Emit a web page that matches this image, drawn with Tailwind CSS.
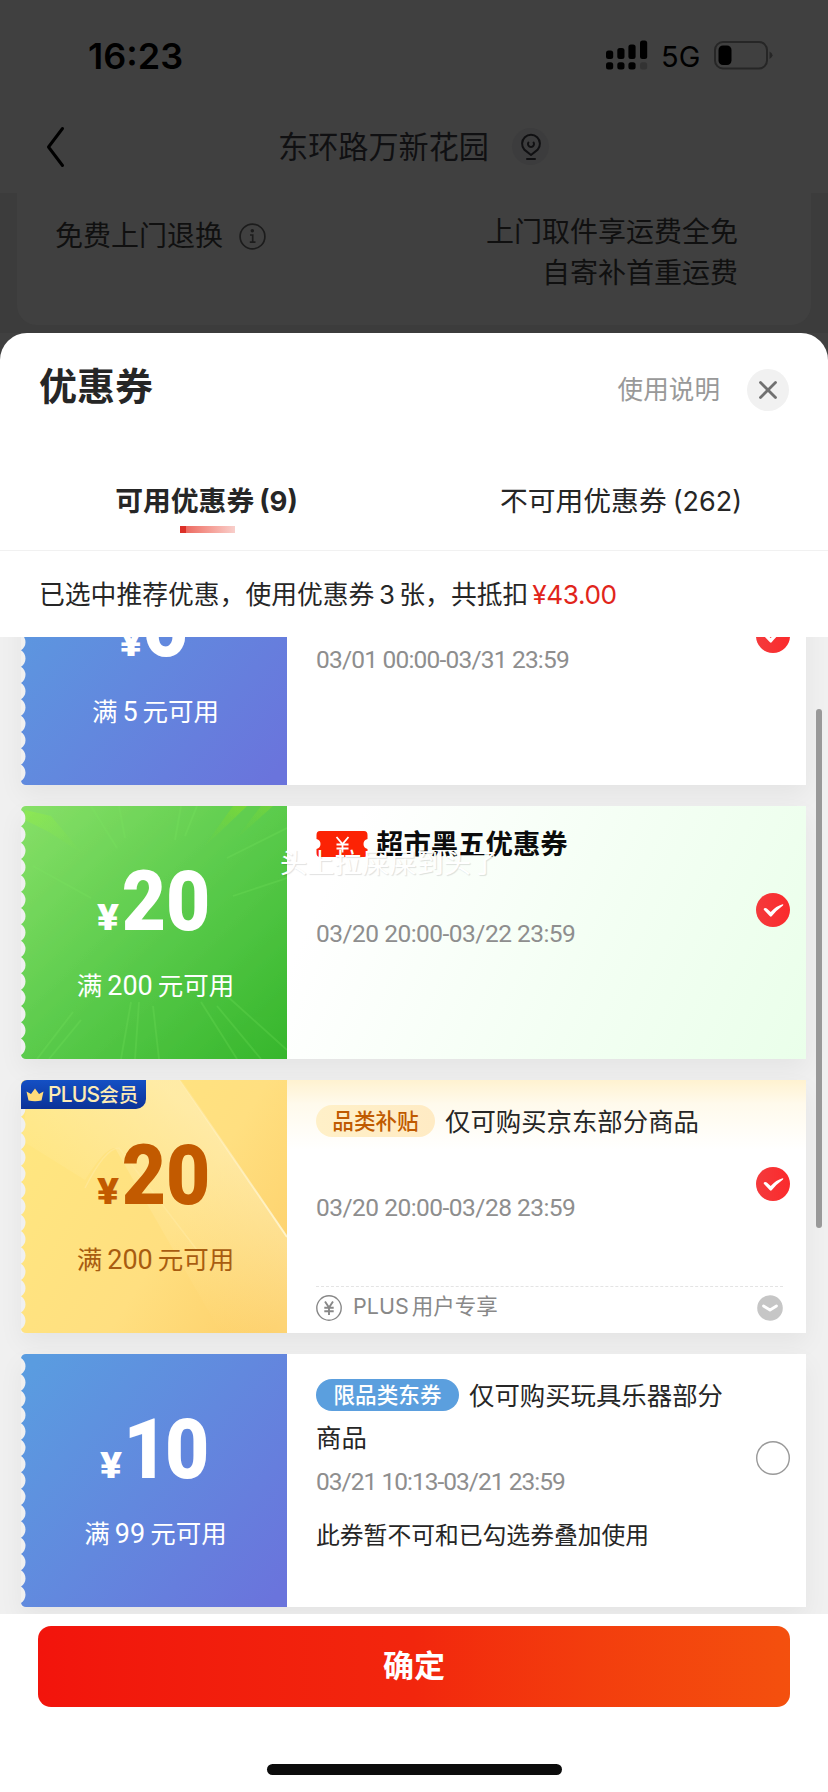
<!DOCTYPE html>
<html lang="zh-CN">
<head>
<meta charset="utf-8">
<title>优惠券</title>
<script src="https://cdn.jsdelivr.net/npm/@tailwindcss/browser@4"></script>
</head>
<body class="w-[828px] h-[1792px] overflow-hidden bg-[#404040] font-['Inter','Noto_Sans_CJK_SC',sans-serif] text-[#262626] whitespace-nowrap">
<svg width="0" height="0" class="absolute">
  <defs>
    <linearGradient id="blue" x1="0" y1="0.1" x2="1" y2="0.9"><stop offset="0" stop-color="#5a9ce0"/><stop offset="1" stop-color="#6a74dc"/></linearGradient>
    <linearGradient id="green" x1="0" y1="0" x2="1" y2="1"><stop offset="0" stop-color="#88e068"/><stop offset="0.5" stop-color="#5bcb4c"/><stop offset="1" stop-color="#36b62c"/></linearGradient>
    <linearGradient id="gold" x1="0" y1="0.3" x2="1" y2="0.9"><stop offset="0" stop-color="#ffe680"/><stop offset="0.55" stop-color="#ffdf80"/><stop offset="1" stop-color="#fdcf69"/></linearGradient>
    <linearGradient id="goldLight" x1="0.2" y1="0.9" x2="0.75" y2="0.2"><stop offset="0.3" stop-color="#fff0b8" stop-opacity="0"/><stop offset="1" stop-color="#fff2c4"/></linearGradient>
    <linearGradient id="goldEdge" x1="0" y1="0" x2="1" y2="1"><stop offset="0" stop-color="#fff8dc" stop-opacity="0.1"/><stop offset="1" stop-color="#fff4cc"/></linearGradient>
    <linearGradient id="lime" x1="0" y1="0" x2="1" y2="1"><stop offset="0" stop-color="#93ee48"/><stop offset="1" stop-color="#7fe050" stop-opacity="0"/></linearGradient>
    <linearGradient id="lime2" x1="1" y1="0" x2="0" y2="1"><stop offset="0" stop-color="#86dc30"/><stop offset="1" stop-color="#6fd040" stop-opacity="0"/></linearGradient>
    <linearGradient id="red" x1="0" y1="0" x2="1" y2="0"><stop offset="0" stop-color="#f43a3c"/><stop offset="1" stop-color="#fb2a2c"/></linearGradient>
    <path id="ticket" d="M266 0H5Q1 0 0 4a9.66 9.66 0 0 1 0 16.33a9.66 9.66 0 0 1 0 16.33a9.66 9.66 0 0 1 0 16.33a9.66 9.66 0 0 1 0 16.33a9.66 9.66 0 0 1 0 16.33a9.66 9.66 0 0 1 0 16.33a9.66 9.66 0 0 1 0 16.33a9.66 9.66 0 0 1 0 16.33a9.66 9.66 0 0 1 0 16.33a9.66 9.66 0 0 1 0 16.33a9.66 9.66 0 0 1 0 16.33a9.66 9.66 0 0 1 0 16.33a9.66 9.66 0 0 1 0 16.33a9.66 9.66 0 0 1 0 16.33a9.66 9.66 0 0 1 0 16.33Q1 253 5 253H266Z"/>
    <clipPath id="ticketClip"><use href="#ticket"/></clipPath>
    <g id="check"><circle cx="17" cy="17" r="17" fill="url(#red)"/><path d="M8.2 15.3Q9.600 14.500 10.800 15.500L14.700 19Q20 13 26.600 11.200Q27.900 11.200 27 12.400Q20.500 17 15.700 23.300Q14.700 24.300 13.700 23L7.800 16.800Q7.400 15.900 8.200 15.300Z" fill="#fff"/></g>
  </defs>
</svg>

<div class="flex flex-col h-[333px]">
  <header class="h-[96px] flex items-center pl-[88px] pr-[55px] text-black">
    <span class="flex-1 text-[36px] font-semibold leading-none tracking-[0px] pt-[15px]">16:23</span>
    <svg class="mt-[13px]" width="42" height="30" viewBox="0 0 42 30"><g fill="#000"><rect x="0" y="10.500" width="7.200" height="8.500" rx="2.500"/><rect x="11.300" y="8" width="7.200" height="11" rx="2.500"/><rect x="22.400" y="4.500" width="7.200" height="14.500" rx="2.500"/><rect x="34" y="0.500" width="7.200" height="18.500" rx="2.500"/><rect x="0" y="22.300" width="7.200" height="7.200" rx="2.500"/><rect x="11.300" y="22.300" width="7.200" height="7.200" rx="2.500"/><rect x="22.400" y="22.300" width="7.200" height="7.200" rx="2.500"/></g><rect x="34" y="22.300" width="7.200" height="7.200" rx="2.500" fill="#333"/></svg>
    <span class="ml-[13px] w-[38px] text-[29px] leading-none pt-[17px]">5G</span>
    <svg class="ml-[15px] mt-[14px]" width="59" height="29" viewBox="0 0 59 29"><rect x="1" y="1" width="52" height="26.500" rx="8" fill="none" stroke="#262626" stroke-width="2"/><rect x="4.500" y="4.500" width="13" height="19.500" rx="4.500" fill="#000"/><path d="M55.500 10.500Q58.500 12 58.500 14.300T55.500 18Z" fill="#262626"/></svg>
  </header>
  <nav class="h-[97px] flex items-center pl-[46px] text-[#101012]">
    <svg class="w-[19px] mt-[4px]" width="19" height="42" viewBox="0 0 19 42" fill="none" stroke="#000" stroke-width="3" stroke-linecap="round" stroke-linejoin="round"><path d="M16.500 2.500L2.500 21L16.500 39.500"/></svg>
    <span class="ml-[213px] w-[211px] text-[30.150px] leading-[40px] mt-[4px]">东环路万新花园</span>
    <span class="ml-[23px] mt-[4px] size-[37px] rounded-full bg-[#3c3c3d] flex items-center justify-center">
      <svg width="22" height="28" viewBox="0 0 22 28" fill="none" stroke="#101012" stroke-width="2" stroke-linecap="round"><path d="M11 22L4.300 16.600A8.900 8.900 0 1 1 17.700 16.600Z" stroke-linejoin="round"/><path d="M8.400 9.500A3 3 0 1 0 13.600 9.500"/><path d="M7 26H15"/></svg>
    </span>
  </nav>
  <div class="flex-1 bg-[#3c3c3c] px-[17px]">
    <div class="h-[132px] bg-[#404040] rounded-b-[20px] flex justify-between pl-[38px] pr-[73px] text-[28px] text-[#101010]">
      <div class="flex h-[40px] mt-[23px] items-center">
        <span>免费上门退换</span>
        <svg class="ml-[16px]" width="27" height="27" viewBox="0 0 27 27" fill="none" stroke="#1c1c1c" stroke-width="1.700"><circle cx="13.500" cy="13.500" r="12.400"/><path d="M11 12H13.700V19M10.800 19.200H16.500"/><circle cx="13.300" cy="7.800" r="0.900" fill="#1c1c1c"/></svg>
      </div>
      <div class="text-right leading-[41px] mt-[19px]">上门取件享运费全免<br>自寄补首重运费</div>
    </div>
  </div>
</div>

<main class="bg-white rounded-t-[27px] h-[1459px] flex flex-col">
  <div class="h-[114px] flex items-center pl-[39px] pr-[39px]">
    <h1 class="flex-1 text-[38px] font-bold leading-none mb-[9px]">优惠券</h1>
    <span class="text-[25.600px] text-[#999] mt-[1px]">使用说明</span>
    <span class="ml-[27px] size-[42px] rounded-full bg-[#f1f1f1] flex items-center justify-center">
      <svg width="20" height="20" viewBox="0 0 20 20" stroke="#707070" stroke-width="2.800" stroke-linecap="round"><path d="M2.500 2.500L17.500 17.500M17.500 2.500L2.500 17.500"/></svg>
    </span>
  </div>
  <div class="h-[104px] border-b border-[#f1f1f1] flex text-[27.800px]">
    <div class="flex-1 flex flex-col items-center pt-[34px]">
      <span class="leading-[40px] font-bold mr-[1px]">可用优惠券<span class="ml-[5px] text-[27.500px]">(9)</span></span>
      <span class="mt-[5px] h-[7px] w-[55px] bg-linear-to-r from-[#ec6a62] to-[#f8cfcb] border-l-6 border-[#dc3028]"></span>
    </div>
    <div class="flex-1 flex justify-center pt-[34px]">
      <span class="leading-[40px]">不可用优惠券<span class="ml-[6px] text-[27px]">(262)</span></span>
    </div>
  </div>
  <p class="h-[86px] leading-[87px] pl-[39px] text-[25.800px]">已选中推荐优惠，使用优惠券<span class="mx-[4.500px]">3</span>张，共抵扣<span class="ml-[4px] text-[#e1251b] text-[26.200px] tracking-[-0.400px]">¥43.00</span></p>

  <section class="relative h-[977px] bg-[#f0f0f0] overflow-hidden">
    <div class="flex flex-col gap-[21px] pl-[21px] pr-[22px] -mt-[105px]">

      <article class="h-[253px] flex shrink-0 shadow-[0_10px_24px_rgba(0,0,0,0.05)]">
        <div class="relative w-[266px] flex flex-col items-center text-white bg-[#f0f0f0]">
          <svg class="absolute inset-0" width="266" height="253"><use href="#ticket" fill="url(#blue)"/></svg>
          <div class="relative mt-[55px] ml-[3px] h-[82px] leading-[82px] flex items-baseline font-['Roboto'] font-black"><span class="text-[37px] scale-x-110">¥</span><span class="text-[83px] scale-x-92">6</span></div>
          <div class="relative mt-[23px] ml-[3px] text-[25.500px] leading-[40px]">满<span class="mx-[5px] font-['Roboto'] text-[27px]">5</span>元可用</div>
        </div>
        <div class="flex-1 bg-white flex pl-[29px] pr-[16px]">
          <div class="flex-1 pt-[106px]"><div class="font-['Roboto'] text-[24.500px] leading-[44px] text-[#8e8e8e] tracking-[-0.800px]">03/01 00:00-03/31 23:59</div></div>
          <svg class="mt-[87px]" width="34" height="34"><use href="#check"/></svg>
        </div>
      </article>

      <article class="h-[253px] flex shrink-0 shadow-[0_10px_24px_rgba(0,0,0,0.05)]">
        <div class="relative w-[266px] flex flex-col items-center text-white bg-[#f0f0f0]">
          <svg class="absolute inset-0" width="266" height="253"><use href="#ticket" fill="url(#green)"/>
            <g clip-path="url(#ticketClip)">
              <path d="M4 4L30 10L62 48L28 26L4 14Z" fill="url(#lime)" opacity="0.600"/>
              <path d="M212 0H226L182 42Z" fill="url(#lime2)" opacity="0.700"/>
              <path d="M240 0H252L214 34Z" fill="url(#lime2)" opacity="0.500"/>
              <path d="M70 0L96 42M98 0L104 32M160 0L154 34M176 0L164 30M266 22L206 52M266 72L212 90M12 60L70 92M110 196L100 253M118 196L114 253M132 200L138 253M52 206L16 253M60 214L28 253M180 196L216 253M196 200L240 253M206 190L266 244" stroke="#7ce860" stroke-width="1.800" opacity="0.220"/>
            </g></svg>
          <div class="relative mt-[55px] ml-[5px] h-[82px] leading-[82px] flex items-baseline font-['Roboto'] font-black"><span class="text-[37px] scale-x-110">¥</span><span class="text-[83px] scale-x-92">20</span></div>
          <div class="relative mt-[23px] ml-[3px] text-[25.500px] leading-[40px]">满<span class="mx-[5px] font-['Roboto'] text-[27px]">200</span>元可用</div>
        </div>
        <div class="flex-1 bg-[linear-gradient(115deg,#ffffff_12%,#f3fff3_60%,#eaffea_100%)] flex pl-[29px] pr-[16px]">
          <div class="flex-1 relative pt-[18px]">
            <div class="h-[88px] flex items-start gap-[8px]">
              <svg class="mt-[7px]" width="52" height="26" viewBox="0 0 52 26"><path d="M4 0H48Q51.500 0 51.500 4V8Q47.500 9 47.500 13T51.500 18V22Q51.500 26 48 26H4Q0.500 26 0.500 22V18Q4.500 17 4.500 13T0.500 8V4Q0.500 0 4 0Z" fill="#fc2304"/><path d="M20.500 6L26.500 13L32.500 6M26.500 13V21.500M20.500 13.500H32.500M20.500 17.500H32.500" stroke="#fff" stroke-width="1.800" fill="none"/></svg>
              <span class="text-[27.400px] font-bold leading-[40px] text-[#0c0c0c]">超市黑五优惠券</span>
            </div>
            <div class="font-['Roboto'] text-[24.500px] leading-[44px] text-[#8e8e8e] tracking-[-0.520px]">03/20 20:00-03/22 23:59</div>
            <div class="absolute left-[-36px] top-[38px] text-[27.300px] leading-[40px] text-white [text-shadow:1px_1px_1px_rgba(0,0,0,0.12)]">头上拉屎屎到头了</div>
          </div>
          <svg class="mt-[87px]" width="34" height="34"><use href="#check"/></svg>
        </div>
      </article>

      <article class="h-[253px] flex shrink-0 shadow-[0_10px_24px_rgba(0,0,0,0.05)]">
        <div class="relative w-[266px] flex flex-col items-center text-[#c25a00] bg-[#f0f0f0]">
          <svg class="absolute inset-0" width="266" height="253"><use href="#ticket" fill="url(#gold)"/>
            <g clip-path="url(#ticketClip)">
              <path d="M10 0H159L266 157V253H200L94 68Q84 68 64 100L0 60Z" fill="url(#goldLight)" opacity="0.550"/>
              <path d="M64 108Q84 68 98 68L176 170" fill="none" stroke="#ffe9a0" stroke-width="1.500" opacity="0.600"/>
              <path d="M159 0L266 157" stroke="url(#goldEdge)" stroke-width="2"/>
            </g></svg>
          <div class="absolute left-0 top-0 w-[125px] h-[29px] rounded-tl-[6px] rounded-br-[10px] bg-linear-to-b from-[#1450c4] to-[#0c3298] flex items-center pl-[5px] text-[#fdebb4]">
            <svg width="18" height="14" viewBox="0 0 18 14"><path d="M0.500 3.500L5 6L9 0.500L13 6L17.500 3.500L15.500 12.500Q9 14 2.500 12.500Z" fill="#ffdc7a"/></svg>
            <span class="ml-[4px] text-[19.500px] font-medium leading-[28px]"><span class="text-[21px] tracking-[-0.800px]">PLUS</span>会员</span>
          </div>
          <div class="relative mt-[55px] ml-[5px] h-[82px] leading-[82px] flex items-baseline font-['Roboto'] font-black"><span class="text-[37px] scale-x-110">¥</span><span class="text-[83px] scale-x-92">20</span></div>
          <div class="relative mt-[23px] ml-[3px] text-[25.500px] leading-[40px] text-[#a85c10]">满<span class="mx-[5px] font-['Roboto'] text-[27px]">200</span>元可用</div>
        </div>
        <div class="flex-1 bg-[linear-gradient(180deg,#fff2d0_0px,#fffaec_24px,#ffffff_70px)] pl-[29px]">
          <div class="flex h-[206px] pr-[16px]">
            <div class="flex-1 pt-[21px]">
              <div class="h-[85px] flex text-[25.400px] leading-[42px]">
                <span class="mt-[4px] h-[32px] w-[119px] mr-[10px] rounded-full bg-linear-to-r from-[#fff0c8] to-[#ffebc4] text-center text-[21.600px] leading-[33px] font-medium text-[#c05a00]">品类补贴</span>仅可购买京东部分商品
              </div>
              <div class="font-['Roboto'] text-[24.500px] leading-[44px] text-[#8e8e8e] tracking-[-0.520px]">03/20 20:00-03/28 23:59</div>
            </div>
            <svg class="mt-[87px]" width="34" height="34"><use href="#check"/></svg>
          </div>
          <div class="mr-[23px] h-[42px] border-t border-dashed border-[#e4e4e4] flex items-center text-[21.500px] text-[#888]">
            <svg width="26" height="26" viewBox="0 0 26 26" fill="none" stroke="#888"><circle cx="13" cy="13" r="12.200" stroke-width="1.400"/><path d="M9 6.500L13 12.500L17 6.500M13 12.500V20M8.300 12.800H17.700M8.300 16.200H17.700" stroke-width="1.900"/></svg>
            <span class="ml-[11px] flex-1 -mt-[2px]"><span class="mr-[3px]">PLUS</span>用户专享</span>
            <svg width="26" height="26" viewBox="0 0 26 26"><circle cx="13" cy="13" r="12.800" fill="#c6c6c6"/><path d="M6.500 11L13 15L19.500 11" fill="none" stroke="#fff" stroke-width="2.800" stroke-linecap="round" stroke-linejoin="round"/></svg>
          </div>
        </div>
      </article>

      <article class="h-[253px] flex shrink-0 shadow-[0_10px_24px_rgba(0,0,0,0.05)]">
        <div class="relative w-[266px] flex flex-col items-center text-white bg-[#f0f0f0]">
          <svg class="absolute inset-0" width="266" height="253"><use href="#ticket" fill="url(#blue)"/></svg>
          <div class="relative mt-[55px] ml-[4px] h-[82px] leading-[82px] flex items-baseline font-['Roboto'] font-black"><span class="text-[37px] scale-x-110">¥</span><span class="-ml-[1px] text-[83px] scale-x-92 tracking-[-3px]">10</span></div>
          <div class="relative mt-[23px] ml-[3px] text-[25.500px] leading-[40px]">满<span class="mx-[5px] font-['Roboto'] text-[27px]">99</span>元可用</div>
        </div>
        <div class="flex-1 bg-white flex justify-between pl-[29px] pr-[16px]">
          <div class="w-[425px] pt-[21px]">
            <div class="h-[85px] text-[25.400px] leading-[42px] whitespace-normal"><span class="inline-block align-top mt-[4px] h-[32px] w-[143px] mr-[10px] rounded-full bg-[#5b9fde] text-center text-[21.600px] leading-[33px] font-medium text-white">限品类东券</span>仅可购买玩具乐器部分商品</div>
            <div class="font-['Roboto'] text-[24.500px] leading-[44px] text-[#8e8e8e] tracking-[-0.980px]">03/21 10:13-03/21 23:59</div>
            <div class="mt-[12px] text-[23.800px] leading-[40px]">此券暂不可和已勾选券叠加使用</div>
          </div>
          <svg class="mt-[87px]" width="34" height="34"><circle cx="17" cy="17" r="16.300" fill="#fff" stroke="#999" stroke-width="1.400"/></svg>
        </div>
      </article>
    </div>
    <div class="absolute left-[816px] top-[72px] w-[6px] h-[519px] rounded-full bg-[#999]"></div>
  </section>

  <footer class="flex flex-col items-center pt-[12px]">
    <button class="w-[752px] h-[81px] rounded-[13px] bg-linear-to-r from-[#f2140c] via-[#f2260d] to-[#f4500e] text-white text-[31px] font-bold">确定</button>
    <div class="mt-[57px] w-[295px] h-[11px] rounded-full bg-[#0c0c0c]"></div>
  </footer>
</main>
</body>
</html>
